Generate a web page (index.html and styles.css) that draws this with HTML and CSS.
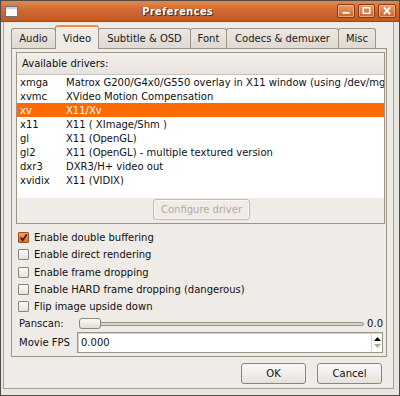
FILE: index.html
```html
<!DOCTYPE html>
<html>
<head>
<meta charset="utf-8">
<link rel="stylesheet" href="styles.css">
</head>
<body>
<div class="window">
  <div class="titlebar">
    <div class="app-icon"></div>
    <div class="title">Preferences</div>
    <div class="wm-buttons">
      <div class="wm-btn"><svg width="18" height="14" viewBox="0 0 18 14"><rect x="5" y="8" width="8" height="2" fill="#fff"/></svg></div>
      <div class="wm-btn"><svg width="16" height="14" viewBox="0 0 16 14"><rect x="4.5" y="3.5" width="7" height="6" fill="none" stroke="#fff" stroke-width="1.6"/></svg></div>
      <div class="wm-btn"><svg width="18" height="14" viewBox="0 0 18 14"><path d="M5.5 3 L12.5 10.5 M12.5 3 L5.5 10.5" stroke="#fff" stroke-width="2.2"/></svg></div>
    </div>
  </div>
  <div class="frame">
    <div class="tabs">
      <div class="tab t-audio">Audio</div>
      <div class="tab active t-video">Video</div>
      <div class="tab t-sub">Subtitle &amp; OSD</div>
      <div class="tab t-font">Font</div>
      <div class="tab t-codec">Codecs &amp; demuxer</div>
      <div class="tab t-misc">Misc</div>
    </div>
    <div class="panel">
      <div class="driver-frame">
        <div class="list">
          <div class="list-header">Available drivers:</div>
          <div class="row"><span class="c1">xmga</span><span class="c2">Matrox G200/G4x0/G550 overlay in X11 window (using /dev/mg</span></div>
          <div class="row"><span class="c1">xvmc</span><span class="c2">XVideo Motion Compensation</span></div>
          <div class="row selected"><span class="c1">xv</span><span class="c2">X11/Xv</span></div>
          <div class="row"><span class="c1">x11</span><span class="c2">X11 ( XImage/Shm )</span></div>
          <div class="row"><span class="c1">gl</span><span class="c2">X11 (OpenGL)</span></div>
          <div class="row"><span class="c1">gl2</span><span class="c2">X11 (OpenGL) - multiple textured version</span></div>
          <div class="row"><span class="c1">dxr3</span><span class="c2">DXR3/H+ video out</span></div>
          <div class="row"><span class="c1">xvidix</span><span class="c2">X11 (VIDIX)</span></div>
        </div>
        <div class="list-footer"><div class="btn disabled configure">Configure driver</div></div>
      </div>
      <div class="checks">
        <div class="check-row"><span class="checkbox checked"><svg width="9" height="9" viewBox="0 0 9 9"><path d="M1.5 4.5 L3.8 7.2 L7.8 1.2" fill="none" stroke="#2e2a26" stroke-width="1.8"/></svg></span>Enable double buffering</div>
        <div class="check-row"><span class="checkbox"></span>Enable direct rendering</div>
        <div class="check-row"><span class="checkbox"></span>Enable frame dropping</div>
        <div class="check-row"><span class="checkbox"></span>Enable HARD frame dropping (dangerous)</div>
        <div class="check-row"><span class="checkbox"></span>Flip image upside down</div>
      </div>
      <div class="form">
        <div class="label">Panscan:</div>
        <div class="slider">
          <div class="trough"><div class="knob"></div></div>
          <div class="value">0.0</div>
        </div>
        <div class="label">Movie FPS</div>
        <div class="entry">
          <div class="entry-text">0.000</div>
          <div class="spin">
            <svg width="7" height="4" viewBox="0 0 7 4"><path d="M0 4 L3.5 0 L7 4Z" fill="#000"/></svg>
            <svg width="7" height="4" viewBox="0 0 7 4"><path d="M0 0 L3.5 4 L7 0Z" fill="#b0a89e"/></svg>
          </div>
        </div>
      </div>
    </div>
    <div class="actions">
      <div class="btn">OK</div>
      <div class="btn">Cancel</div>
    </div>
  </div>
</div>
</body>
</html>
```

FILE: styles.css
```css
* { box-sizing: border-box; }
html, body { margin: 0; padding: 0; }
body {
  width: 400px;
  height: 396px;
  overflow: hidden;
  background: #efebe7;
  font-family: "DejaVu Sans", sans-serif;
  font-size: 10px;
  color: #101010;
}
.window {
  width: 400px;
  height: 396px;
  display: flex;
  flex-direction: column;
  border: 1px solid #4f4b47;
  background: #efebe7;
}
.titlebar {
  height: 21px;
  flex: none;
  display: flex;
  align-items: center;
  background: linear-gradient(#e08850, #cf6a32 45%, #c25a22);
  border-bottom: 1px solid #9a4a1c;
  padding: 0 3px 0 4px;
}
.app-icon {
  width: 13px;
  height: 11px;
  border: 1px solid #6c7480;
  background: linear-gradient(#c8d4e4 0, #c8d4e4 2px, #fff 2px);
}
.title {
  flex: 1;
  text-align: center;
  color: #fff;
  font-weight: bold;
  font-size: 10px;
  letter-spacing: 0.3px;
  text-shadow: 1px 1px 0 #5a2a10, -1px 0 0 #7a3a16;
}
.wm-buttons { display: flex; gap: 3px; }
.wm-btn {
  width: 18px;
  height: 14px;
  border: 1px solid #8a3a12;
  border-radius: 2px;
  background: linear-gradient(#e89a66, #cc6630);
  box-shadow: inset 0 0 0 1px rgba(255, 220, 190, 0.5);
  display: flex;
  align-items: center;
  justify-content: center;
}
.wm-btn:nth-child(2) { width: 17px; }
.frame {
  flex: 1;
  display: flex;
  flex-direction: column;
  border-left: 2px solid #e9e5e0;
  border-right: 5px solid #e9e5e0;
  border-bottom: 6px solid #e9e5e0;
  box-shadow: inset 1px 0 0 #a8a096, inset -1px 0 0 #a8a096, inset 0 -1px 0 #a8a096;
  padding: 3px 7px 0 8px;
}
.tabs {
  display: flex;
  align-items: flex-end;
  height: 23px;
  position: relative;
  z-index: 1;
}
.tab {
  height: 20px;
  border: 1px solid #9d9486;
  border-bottom: none;
  border-radius: 3px 3px 0 0;
  background: linear-gradient(#ebe7e2, #dfd9d2);
  display: flex;
  align-items: center;
  justify-content: center;
  color: #1a1a1a;
  margin-right: -1px;
}
.tab.active {
  background: #efebe7;
  border-top: 2px solid #f08a3c;
  margin-bottom: -1px;
  height: 24px;
}
.t-audio { width: 45px; }
.t-video { width: 44px; }
.t-sub { width: 93px; }
.t-font { width: 37px; }
.t-codec { width: 113px; }
.t-misc { width: 38px; }
.panel {
  border: 1px solid #9d9486;
  height: 309px;
  padding: 3px 1px 0 4px;
  display: flex;
  flex-direction: column;
}
.driver-frame {
  border: 1px solid #9d9486;
  height: 172px;
  display: flex;
  flex-direction: column;
}
.list {
  background: #fff;
  height: 145px;
}
.list-header {
  height: 22px;
  background: linear-gradient(#f2efeb, #e8e3de);
  border-bottom: 1px solid #c9c2b9;
  padding-left: 5px;
  display: flex;
  align-items: center;
}
.row {
  height: 14px;
  display: flex;
  align-items: center;
  white-space: nowrap;
  overflow: hidden;
}
.row.selected { background: #fd6a03; color: #fff; }
.c1 { width: 49px; padding-left: 3px; flex: none; }
.c2 { flex: none; }
.list-footer {
  flex: 1;
  display: flex;
  justify-content: center;
  align-items: flex-start;
  padding-top: 1px;
}
.btn {
  height: 21px;
  border: 1px solid #8e857a;
  border-radius: 3px;
  background: linear-gradient(#fbfaf9, #e6e1dc);
  display: flex;
  align-items: center;
  justify-content: center;
}
.btn.disabled {
  border-color: #c4bcb2;
  color: #b3aba1;
  background: #efebe7;
  box-shadow: inset 0 0 0 1px #f8f6f4;
}
.configure { width: 97px; margin-left: 2px; }
.checks {
  padding-top: 5px;
}
.check-row {
  height: 17.3px;
  display: flex;
  align-items: center;
  padding-left: 2px;
}
.checkbox {
  width: 11px;
  height: 11px;
  border: 1px solid #8e857a;
  border-radius: 1px;
  background: linear-gradient(#fdfcfb, #e6e1dc);
  margin-right: 5px;
  display: flex;
  align-items: center;
  justify-content: center;
}
.checkbox.checked {
  background: linear-gradient(#f9a060, #ea6a18);
  border-color: #a0521e;
}
.form {
  display: grid;
  grid-template-columns: 58px 1fr;
  grid-template-rows: 17px 21px;
  padding-left: 3px;
  padding-right: 2px;
}
.label { display: flex; align-items: center; }
.slider { display: flex; align-items: center; }
.trough {
  flex: 1;
  height: 4px;
  border: 1px solid #9d9486;
  border-radius: 2px;
  background: #d8d2ca;
  position: relative;
  margin-left: 2px;
  margin-right: 3px;
}
.knob {
  position: absolute;
  left: -1px;
  top: -5px;
  width: 22px;
  height: 11px;
  border: 1px solid #8e857a;
  border-radius: 3px;
  background: linear-gradient(#fbfaf9, #e2ddd7);
}
.value { width: 16px; text-align: right; }
.entry {
  border: 1px solid #9d9486;
  background: #fff;
  box-shadow: inset 1px 1px 0 #d8d2ca;
  display: flex;
  align-items: center;
  padding-left: 3px;
}
.entry-text { flex: 1; }
.spin {
  width: 11px;
  height: 19px;
  border-left: 1px solid #d8d2ca;
  display: flex;
  flex-direction: column;
  align-items: center;
  justify-content: center;
  gap: 3px;
}
.spin svg { display: block; }
.actions {
  display: flex;
  justify-content: flex-end;
  gap: 11px;
  padding-top: 6px;
  padding-right: 5px;
}
.actions .btn { width: 65px; height: 21px; }
```
